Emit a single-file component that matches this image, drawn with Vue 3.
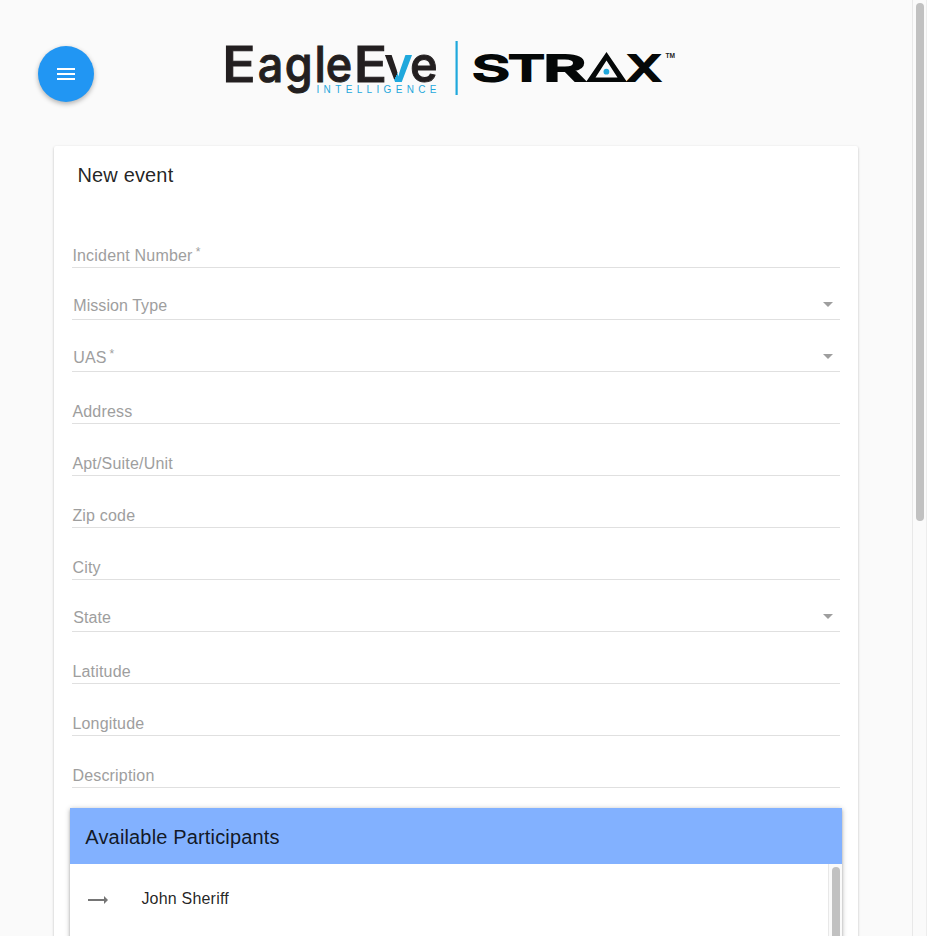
<script setup>
const fields = [
  { label: 'Incident Number', required: true },
  { label: 'Mission Type', select: true },
  { label: 'UAS', select: true, required: true },
  { label: 'Address' },
  { label: 'Apt/Suite/Unit' },
  { label: 'Zip code' },
  { label: 'City' },
  { label: 'State', select: true },
  { label: 'Latitude' },
  { label: 'Longitude' },
  { label: 'Description' },
]
const participants = ['John Sheriff']
</script>

<template>
  <div class="window">
    <main class="page">
      <header class="header">
        <button class="menu" aria-label="Menu">
          <svg width="24" height="24" viewBox="0 0 24 24"><path fill="#fff" d="M3 18h18v-2H3v2zm0-5h18v-2H3v2zm0-7v2h18V6H3z" /></svg>
        </button>
        <svg class="logo" width="460" height="64" viewBox="220 36 460 64">
          <defs>
            <linearGradient id="arm" gradientUnits="userSpaceOnUse" x1="390" y1="60" x2="412" y2="70">
              <stop offset="0.5" stop-color="#231f20" />
              <stop offset="0.5" stop-color="#1fa8dc" />
            </linearGradient>
            <clipPath id="above"><rect x="380" y="40" width="40" height="42" /></clipPath>
          </defs>
          <g class="eagle">
            <text transform="translate(222 81.600) scale(1.12 1)">E</text>
            <text transform="translate(223.500 81.600) scale(0.9 1)" x="38 68 101 113.500">agle</text>
            <text transform="translate(353.500 81.600) scale(1.12 1)">E</text>
            <g clip-path="url(#above)">
              <text x="384" y="81.600" textLength="29" lengthAdjust="spacingAndGlyphs" class="wye">y</text>
            </g>
            <text transform="translate(410 81.600) scale(0.94 1)">e</text>
          </g>
          <text class="intel" x="316.500" y="92.500" textLength="120" lengthAdjust="spacing">INTELLIGENCE</text>
          <rect x="455.500" y="41" width="2.200" height="54" fill="#1fa8dc" />
          <g class="strax">
            <text x="472" y="81" textLength="38" lengthAdjust="spacingAndGlyphs">S</text>
            <text x="508" y="81" textLength="37" lengthAdjust="spacingAndGlyphs">T</text>
            <text x="543" y="81" textLength="43" lengthAdjust="spacingAndGlyphs">R</text>
            <text x="627" y="81" textLength="34" lengthAdjust="spacingAndGlyphs">X</text>
          </g>
          <path fill="#050808" fill-rule="evenodd" d="M606.500 52L627 82H586ZM606.500 60.500L595.500 77.500H617.500Z" />
          <circle cx="606.400" cy="71.700" r="2.900" fill="#1fa8dc" />
          <text class="tm" x="665.500" y="58" textLength="9.500" lengthAdjust="spacingAndGlyphs">TM</text>
        </svg>
      </header>

      <section class="card">
        <h1 class="title">New event</h1>
        <div class="form">
          <div v-for="f in fields" :key="f.label" class="field" :class="{ select: f.select }">
            <span class="label">{{ f.label }}<span v-if="f.required" class="star">*</span></span>
            <span v-if="f.select" class="caret"></span>
          </div>
        </div>

        <div class="panel">
          <h2 class="panel-title">Available Participants</h2>
          <div class="panel-body">
            <div class="list">
              <div v-for="p in participants" :key="p" class="person">
                <svg class="arrow" width="20" height="8" viewBox="0 0 20 8"><path fill="#757575" d="M0 3h16V0l4 4-4 4V5H0z" /></svg>
                <span>{{ p }}</span>
              </div>
            </div>
            <div class="track"><div class="thumb"></div></div>
          </div>
        </div>
      </section>
    </main>
    <div class="track main-track"><div class="thumb"></div></div>
  </div>
</template>

<style>
body { overflow: hidden; background: #fafafa; }
</style>

<style scoped>
.window {
  display: flex;
  width: 927px;
  height: 936px;
  overflow: hidden;
  background: #fafafa;
  color: rgba(0, 0, 0, 0.87);
  font-family: "Liberation Sans", Arial, sans-serif;
}
.page { flex: 1; min-width: 0; }
.header {
  display: flex;
  align-items: flex-start;
  height: 146px;
  box-sizing: border-box;
  padding: 36px 0 0 38px;
}
.menu {
  display: grid;
  place-items: center;
  width: 56px;
  height: 56px;
  margin-top: 10px;
  padding: 0;
  border: 0;
  border-radius: 50%;
  background: #2196f3;
  box-shadow: 0 2px 5px rgba(0, 0, 0, 0.3);
}
.logo { margin-left: 126px; overflow: visible; }
.eagle { font: 500 50px Inter, sans-serif; fill: #231f20; stroke: #231f20; stroke-width: 1px; }
.wye { fill: url(#arm); stroke: none; font-weight: 600; }
.intel { font: 10px "Liberation Sans", sans-serif; fill: #1fa8dc; }
.strax { font: 500 36px Inter, sans-serif; fill: #050808; stroke: #050808; stroke-width: 2px; }
.tm { font: 700 7px "Liberation Sans", sans-serif; fill: #222; }
.card {
  width: 804px;
  height: 800px;
  margin-left: 54px;
  background: #fff;
  border-radius: 2px;
  box-shadow: 0 1px 3px rgba(0, 0, 0, 0.2), 0 1px 1px rgba(0, 0, 0, 0.14);
}
.title {
  margin: 0;
  height: 70px;
  box-sizing: border-box;
  padding: 17px 24px 0 23.500px;
  font-size: 20px;
  line-height: 24px;
  font-weight: 400;
  letter-spacing: 0.15px;
}
.form { padding: 0 18px; }
.field {
  display: flex;
  align-items: flex-start;
  justify-content: space-between;
  height: 52px;
  box-sizing: border-box;
  padding: 30px 0 0 0.4px;
  border-bottom: 1px solid #e0e0e0;
}
.field.select { padding: 28px 7px 0 1.3px; }
.label {
  color: #9e9e9e;
  font-size: 16px;
  line-height: 20px;
  letter-spacing: 0.19px;
}
.select .label { letter-spacing: 0.06px; }
.star {
  margin-left: 3px;
  font-size: 12px;
  line-height: 0;
  vertical-align: 5px;
}
.caret {
  margin-top: 6px;
  border: 5px solid transparent;
  border-top-color: #9e9e9e;
  border-bottom: 0;
}
.panel {
  width: 772px;
  height: 200px;
  margin: 20px 0 0 16px;
  background: #fff;
  box-shadow: 0 1px 5px rgba(0, 0, 0, 0.3), 0 2px 2px rgba(0, 0, 0, 0.14);
}
.panel-title {
  margin: 0;
  height: 56px;
  padding: 1px 15px 0 15.3px;
  box-sizing: border-box;
  background: #82b1ff;
  font-size: 20px;
  line-height: 56px;
  font-weight: 400;
  letter-spacing: 0.16px;
}
.panel-body { display: flex; height: 144px; }
.list { flex: 1; }
.person {
  display: flex;
  align-items: center;
  height: 72px;
  gap: 33.4px;
  padding-left: 18px;
  box-sizing: border-box;
  font-size: 16px;
  line-height: 20px;
  letter-spacing: 0.2px;
}
.person span { margin-top: -3px; }
.track {
  width: 14px;
  box-sizing: border-box;
  padding: 3px 2px 0 3px;
  background: #fafafa;
  border-left: 1px solid #e8e8e8;
}
.main-track { width: 15px; border-right: 1px solid #ededed; }
.thumb {
  width: 8px;
  height: 160px;
  border-radius: 4px;
  background: #c1c1c1;
}
.main-track .thumb { height: 518px; }
.panel .track { overflow: hidden; }
</style>
